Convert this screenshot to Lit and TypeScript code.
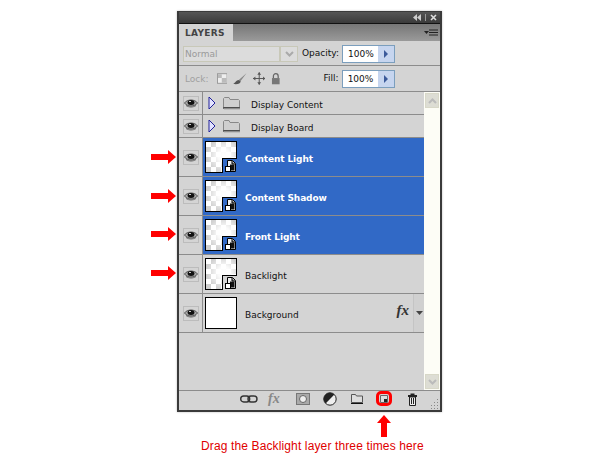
import { LitElement, html, css } from "lit";
import { customElement } from "lit/decorators.js";

const eye = html`<svg width="14" height="10" viewBox="0 0 14 10"><path d="M0.5 5C3 1 11 1 13.5 5C11 9 3 9 0.5 5Z" fill="#a8a8a8" stroke="#555" stroke-width="1"/><ellipse cx="7" cy="4.4" rx="3.4" ry="2.5" fill="#111"/><path d="M2 7.5C5 9.5 9 9.5 12 7.5" stroke="#666" fill="none"/><rect x="5" y="3" width="2" height="1" fill="#ccc"/></svg>`;

const chip = html`<svg class="chip" width="11" height="12" viewBox="0 0 11 12">
  <path d="M2.5 .5H7.5L10.5 3.5V11.5H2.5Z" fill="#eee" stroke="#000"/>
  <path d="M7 1V4H10" fill="#999" stroke="#000"/>
  <rect x="5" y="4.5" width="4.5" height="6" fill="#111"/>
  <rect x=".5" y="6.5" width="5" height="5" fill="#fff" stroke="#000"/></svg>`;

const folder = html`<svg width="17" height="13" viewBox="0 0 17 13"><path d="M.5 10.5V1.5L1.5 .5H6L7 2.5H15.5L16.5 3.5V10.5Z" fill="#cfcfcf" stroke="#888"/><path d="M0 11H17" stroke="#111"/><path d="M1 12H17" stroke="#aaa"/></svg>`;
const tri = html`<svg width="8" height="14" viewBox="0 0 8 14"><path d="M1 1L7 7L1 13Z" fill="#e4e4ff" stroke="#22229a"/></svg>`;
const spin = html`<span class="spin"><svg width="6" height="8" viewBox="0 0 6 8"><path d="M1 0L5 4L1 8Z" fill="#3b5a9a"/></svg></span>`;
const redArrow = (cls: string) => html`<svg class="arrow ${cls}" width="25" height="14" viewBox="0 0 25 14"><path d="M0 4H17V0L25 7L17 14V10H0Z" fill="#f00"/></svg>`;

@customElement("app-root")
export class AppRoot extends LitElement {
  static styles = css`
    :host { display: block; position: relative; width: 600px; height: 461px; background: #fff; overflow: hidden;
      font-family: "DejaVu Sans", sans-serif; font-size: 9px; color: #111; }
    .wrap { padding: 11px 0 0 177px; }
    .panel { width: 261px; height: 398px; border: 2px solid #3a3a3a; border-top-width: 1px; background: #d4d4d4; display: flex; flex-direction: column; box-shadow: 0 0 2px #bbb; }
    .title { height: 11px; background: linear-gradient(#555, #3a3a3a); border-bottom: 1px solid #111; display: flex; justify-content: flex-end; align-items: center; gap: 4px; padding-right: 3px; }
    .tabs { height: 17px; background: linear-gradient(#767676, #9a9a9a); display: flex; justify-content: space-between; border-bottom: 1px solid #d4d4d4; }
    .tab { width: 54px; height: 18px; background: #d4d4d4; font-weight: bold; font-size: 9px; line-height: 17px; padding: 1px 0 0 6px; box-sizing: border-box; color: #444; letter-spacing: .3px; }
    .menu { display: flex; align-items: center; padding-right: 2px; }
    .row1 { height: 24px; display: flex; align-items: center; padding-left: 4px; border-bottom: 1px solid #8c8c8c; box-sizing: border-box; }
    .row2 { height: 26px; display: flex; align-items: center; padding-left: 6px; border-bottom: 1px solid #8c8c8c; box-sizing: border-box; }
    .select { width: 97px; height: 16px; border: 1px solid #c8c8b8; background: #dcdcdc; box-sizing: border-box; color: #9a9a9a; line-height: 14px; padding-left: 1px; font-size: 9px; }
    .drop { width: 18px; height: 16px; border: 1px solid #c8c8b8; box-sizing: border-box; background: #dcdcdc; display: flex; align-items: center; justify-content: center; }
    .lab { font-size: 9px; color: #111; padding-bottom: 2px; }
    .op { margin-left: 4px; }
    .num { display: flex; height: 18px; width: 53px; border: 1px solid #7b9ebd; box-sizing: border-box; background: #fff; margin-left: 3px; font-size: 9px; line-height: 17px; padding-left: 5px; position: relative; }
    .spin { position: absolute; right: 0; top: 0; bottom: 0; width: 16px; background: #c6d5ef; display: flex; align-items: center; justify-content: center; }
    .lock { color: #a0a0a0; font-size: 9px; margin-right: 8px; }
    .lockicons { display: flex; align-items: center; gap: 6px; width: 64px; }
    .fill { margin-left: 43px; }
    .body { flex: 1; display: flex; min-height: 0; }
    .list { width: 245px; display: flex; flex-direction: column; }
    .sb { width: 16px; background: #fdfdf6; display: flex; flex-direction: column; justify-content: space-between; padding: 1px 0 1px 1px; box-sizing: border-box; }
    .sbtn { width: 14px; height: 15px; border: 1px solid #d8d8c8; background: #ddddd4; box-sizing: border-box; display: flex; align-items: center; justify-content: center; }
    .layer { display: flex; border-bottom: 1px solid #8c8c8c; box-sizing: border-box; }
    .small { height: 23px; }
    .big { height: 39px; }
    .vis { width: 23px; border-right: 1px solid #8c8c8c; display: flex; align-items: center; justify-content: center; flex: none; }
    .eyebox { width: 16px; height: 15px; border: 1px solid #bcbcbc; box-sizing: border-box; display: flex; align-items: center; justify-content: center; }
    .cont { flex: 1; display: flex; align-items: center; min-width: 0; position: relative; }
    .sel { background: #3169c6; color: #fff; font-weight: bold; letter-spacing: -.12px; }
    .thumb { margin-left: 2px; width: 32px; height: 32px; border: 1px solid #000; box-sizing: border-box; background: radial-gradient(circle at 60% 45%, #fff 0, rgba(255,255,255,.9) 25%, rgba(255,255,255,0) 70%), repeating-conic-gradient(#d0d0d0 0 25%, #fff 0 50%) 0 0 / 10px 10px; position: relative; flex: none; }
    .thumb.white { background: #fff; }
    .notch { position: absolute; right: -1px; bottom: -1px; width: 15px; height: 15px; background: #d4d4d4; border-left: 1px solid #000; border-top: 1px solid #000; box-sizing: border-box; }
    .sel .notch { background: #3169c6; }
    .chip { position: absolute; right: 0; bottom: 0; }
    .name { margin-left: 8px; font-size: 9px; padding-top: 4px; }
    .sname { margin-left: 11px; font-size: 9px; padding-top: 4px; }
    .fx { position: absolute; right: 15px; top: 8px; font: italic bold 15px "Liberation Serif", serif; color: #333; }
    .fxd { position: absolute; right: 0; top: 0; bottom: 0; width: 10px; border-left: 1px solid #c4c4c4; background: #d0d0d0; display: flex; align-items: center; justify-content: center; }
    .tri { margin-left: 5px; display: flex; }
    .fold { margin-left: 7px; display: flex; }
    .foot { height: 20px; box-sizing: border-box; border-top: 1px solid #8c8c8c; display: flex; align-items: center; padding: 0 0 3px 61px; position: relative; }
    .foot > * { flex: none; }
    .target { position: absolute; left: 197px; top: 0; width: 16px; height: 15px; border: 3px solid #f00; border-radius: 5px; box-sizing: border-box; display: flex; align-items: center; justify-content: center; }
    .grip { position: absolute; right: 1px; bottom: 1px; }
    .arrow { position: absolute; left: 151px; }
    .a1 { top: 150px; } .a2 { top: 189px; } .a3 { top: 227px; } .a4 { top: 266px; }
    .up { position: absolute; left: 377px; top: 415px; }
    .caption { position: absolute; left: 201px; top: 439px; font: 12px "Liberation Sans", sans-serif; color: #e00000; white-space: nowrap; letter-spacing: .13px; }
    .fxf { font: italic bold 14px "Liberation Serif", serif; color: #888; width: 28px; margin-left: 10px; }
    .mask { margin-right: 13px; }
    .adj { margin-right: 14px; }
    .fol { margin-right: 44px; }
  `;

  private big(name: string, sel: boolean) {
    return html`<div class="layer big"><div class="vis"><span class="eyebox">${eye}</span></div>
      <div class="cont ${sel ? "sel" : ""}"><div class="thumb"><span class="notch"></span>${chip}</div><span class="name">${name}</span></div></div>`;
  }

  private small(name: string) {
    return html`<div class="layer small"><div class="vis"><span class="eyebox">${eye}</span></div><div class="cont"><span class="tri">${tri}</span><span class="fold">${folder}</span><span class="sname">${name}</span></div></div>`;
  }

  render() {
    return html`<div class="wrap"><div class="panel">
      <div class="title"><svg width="8" height="7" viewBox="0 0 8 7"><path d="M4 0V7L0 3.5ZM8 0V7L4 3.5Z" fill="#ccc"/></svg><svg width="1" height="7"><rect width="1" height="7" fill="#999"/></svg><svg width="7" height="7" viewBox="0 0 7 7"><path d="M1 1L6 6M6 1L1 6" stroke="#ddd" stroke-width="1.6"/></svg></div>
      <div class="tabs"><div class="tab">LAYERS</div><div class="menu"><svg width="14" height="8" viewBox="0 0 14 8"><path d="M0 2H5L2.5 5Z" fill="#222"/><path d="M5 1H14M5 3.5H14M5 6H14" stroke="#222"/></svg></div></div>
      <div class="row1"><div class="select">Normal</div><div class="drop"><svg width="9" height="6" viewBox="0 0 9 6"><path d="M1 1L4.5 4.5L8 1" fill="none" stroke="#aaa" stroke-width="2"/></svg></div><span class="lab op">Opacity:</span><div class="num">100%${spin}</div></div>
      <div class="row2"><span class="lock">Lock:</span><div class="lockicons">
        <svg width="11" height="11" viewBox="0 0 11 11"><rect x=".5" y=".5" width="10" height="10" fill="#eee" stroke="#999"/><path d="M1 1H5V5H1ZM5 5H10V10H5Z" fill="#bbb"/></svg>
        <svg width="14" height="12" viewBox="0 0 14 12"><path d="M14 0L6 7L8 8Z" fill="#888"/><path d="M6 7C3 7 3 10 0 11C4 12 8 11 8 8Z" fill="#555"/></svg>
        <svg width="13" height="13" viewBox="0 0 13 13"><path d="M6.5 0V13M0 6.5H13" stroke="#555"/><path d="M6.5 0L4.5 2.5H8.5ZM6.5 13L4.5 10.5H8.5ZM0 6.5L2.5 4.5V8.5ZM13 6.5L10.5 4.5V8.5Z" fill="#555"/></svg>
        <svg width="10" height="12" viewBox="0 0 10 12"><path d="M2.5 5V3A2.5 2.5 0 0 1 7.5 3V5" fill="none" stroke="#666" stroke-width="1.3"/><rect x="1" y="5" width="8" height="6.5" fill="#777"/></svg>
      </div><span class="lab fill">Fill:</span><div class="num">100%${spin}</div></div>
      <div class="body">
        <div class="list">
          ${this.small("Display Content")}
          ${this.small("Display Board")}
          ${this.big("Content Light", true)}
          ${this.big("Content Shadow", true)}
          ${this.big("Front Light", true)}
          ${this.big("Backlight", false)}
          <div class="layer big"><div class="vis"><span class="eyebox">${eye}</span></div><div class="cont"><div class="thumb white"></div><span class="name">Background</span><span class="fx">fx</span><span class="fxd"><svg width="7" height="4" viewBox="0 0 7 4"><path d="M0 0H7L3.5 4Z" fill="#444"/></svg></span></div></div>
        </div>
        <div class="sb">
          <div class="sbtn"><svg width="9" height="6" viewBox="0 0 9 6"><path d="M1 5L4.5 1.5L8 5" fill="none" stroke="#bbb" stroke-width="2"/></svg></div>
          <div class="sbtn"><svg width="9" height="6" viewBox="0 0 9 6"><path d="M1 1L4.5 4.5L8 1" fill="none" stroke="#bbb" stroke-width="2"/></svg></div>
        </div>
      </div>
      <div class="foot">
        <svg width="18" height="8" viewBox="0 0 18 8"><rect x=".7" y="1" width="9" height="6" rx="3" fill="none" stroke="#333" stroke-width="1.4"/><rect x="8" y="1" width="9" height="6" rx="3" fill="none" stroke="#333" stroke-width="1.4"/></svg>
        <span class="fxf">fx</span>
        <svg class="mask" width="14" height="12" viewBox="0 0 14 12"><rect x=".5" y=".5" width="13" height="11" fill="#aaa" stroke="#777"/><circle cx="7" cy="6" r="3.5" fill="#eee" stroke="#666"/></svg>
        <svg class="adj" width="14" height="14" viewBox="0 0 14 14"><circle cx="7" cy="7" r="6.2" fill="#eee" stroke="#222"/><path d="M7 .8A6.2 6.2 0 0 0 2.6 11.4L11.4 2.6A6.2 6.2 0 0 0 7 .8Z" fill="#222"/></svg>
        <svg class="fol" width="12" height="10" viewBox="0 0 12 10"><path d="M.5 8.5V.5H4.5L5.5 2H11.5V8.5Z" fill="#ddd" stroke="#555"/><path d="M0 9.5H12" stroke="#111"/></svg>
        <span class="target"><svg width="8" height="8" viewBox="0 0 8 8"><path d="M.5 .5H7.5V7.5H.5Z" fill="#ddd" stroke="#666"/><rect x="4" y="4" width="3" height="3" fill="#222"/></svg></span>
        <svg width="11" height="13" viewBox="0 0 11 13"><rect x="1" y="2" width="9" height="2" fill="#222"/><rect x="3.5" y=".5" width="4" height="1.5" fill="#222"/><path d="M2.5 4V12.5H8.5V4Z" fill="#eee" stroke="#222"/><path d="M4.5 5V11M6.5 5V11" stroke="#222"/></svg>
        <svg class="grip" width="10" height="10" viewBox="0 0 10 10"><path d="M8 0h1v1h-1zM8 3h1v1h-1zM5 3h1v1h-1zM8 6h1v1h-1zM5 6h1v1h-1zM2 6h1v1h-1zM8 9h1v1h-1zM5 9h1v1h-1zM2 9h1v1h-1z" fill="#888"/></svg>
      </div>
    </div></div>
    ${redArrow("a1")}${redArrow("a2")}${redArrow("a3")}${redArrow("a4")}
    <svg class="up" width="14" height="22" viewBox="0 0 14 22"><path d="M7 0L14 8H10V22H4V8H0Z" fill="#f00"/></svg>
    <div class="caption">Drag the Backlight layer three times here</div>`;
  }
}
